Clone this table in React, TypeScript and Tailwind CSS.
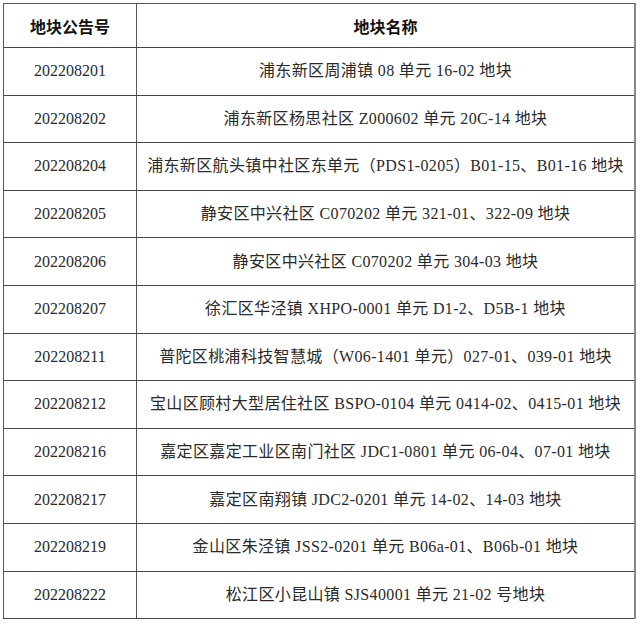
import React from 'react';

const rows: [string, string][] = [
  ['202208201', '浦东新区周浦镇 08 单元 16-02 地块'],
  ['202208202', '浦东新区杨思社区 Z000602 单元 20C-14 地块'],
  ['202208204', '浦东新区航头镇中社区东单元（PDS1-0205）B01-15、B01-16 地块'],
  ['202208205', '静安区中兴社区 C070202 单元 321-01、322-09 地块'],
  ['202208206', '静安区中兴社区 C070202 单元 304-03 地块'],
  ['202208207', '徐汇区华泾镇 XHPO-0001 单元 D1-2、D5B-1 地块'],
  ['202208211', '普陀区桃浦科技智慧城（W06-1401 单元）027-01、039-01 地块'],
  ['202208212', '宝山区顾村大型居住社区 BSPO-0104 单元 0414-02、0415-01 地块'],
  ['202208216', '嘉定区嘉定工业区南门社区 JDC1-0801 单元 06-04、07-01 地块'],
  ['202208217', '嘉定区南翔镇 JDC2-0201 单元 14-02、14-03 地块'],
  ['202208219', '金山区朱泾镇 JSS2-0201 单元 B06a-01、B06b-01 地块'],
  ['202208222', '松江区小昆山镇 SJS40001 单元 21-02 号地块'],
];

const serif = { fontFamily: '"Liberation Serif", "Noto Sans CJK SC", serif' };

export default function App() {
  return (
    <div className="w-[640px] h-[624px] bg-white pt-[3px] pl-[3px]">
      <div className="w-[633px] border-l border-t border-[#555] border-r-2 border-r-[#888]">
        <div className="grid grid-cols-[133px_1fr] h-[44px] border-b border-[#444] font-['Noto_Sans_CJK_SC',sans-serif] font-bold text-[16px] text-[#111]">
          <div className="flex items-center justify-center border-r border-[#555]">地块公告号</div>
          <div className="flex items-center justify-center">地块名称</div>
        </div>
        {rows.map(([id, name]) => (
          <div key={id} className="grid grid-cols-[133px_1fr] h-[47.6px] border-b border-[#444] text-[16px] text-[#2a2a2a]" style={serif}>
            <div className="flex items-center justify-center border-r border-[#555]">{id}</div>
            <div className="flex items-center justify-center whitespace-nowrap tracking-[0.35px]">{name}</div>
          </div>
        ))}
      </div>
    </div>
  );
}
